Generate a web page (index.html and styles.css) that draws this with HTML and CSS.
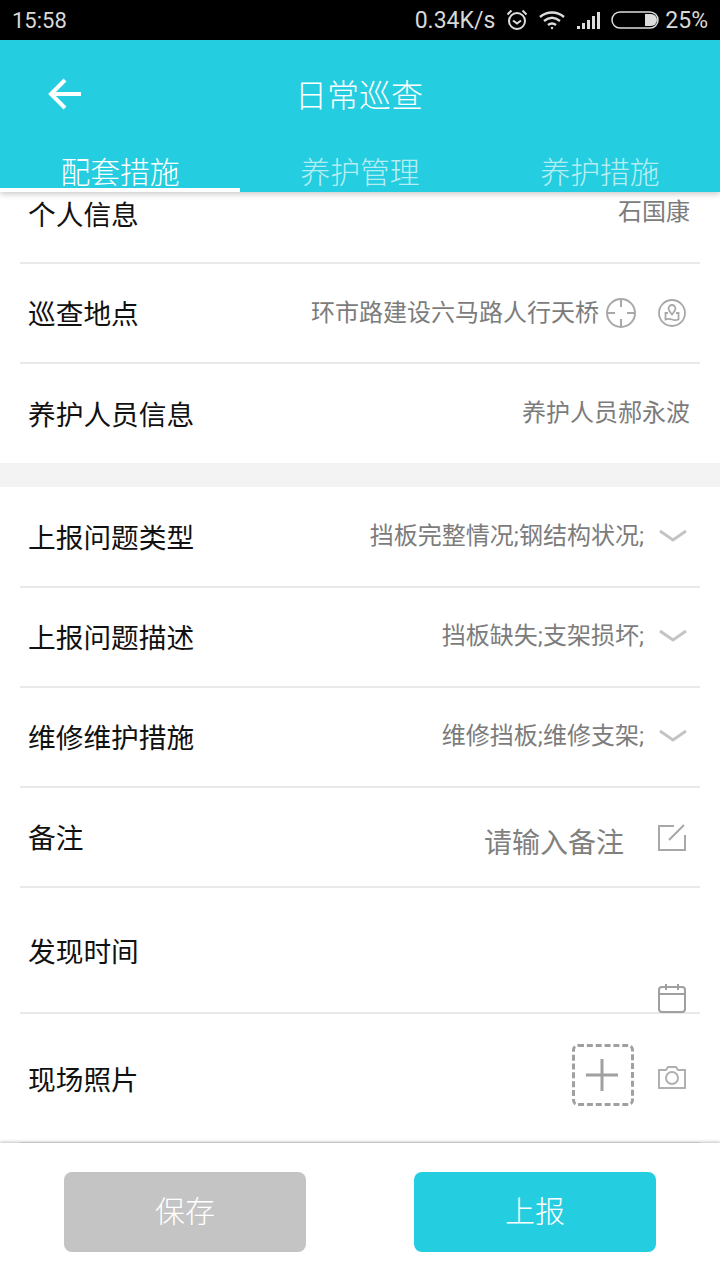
FILE: index.html
```html
<!DOCTYPE html>
<html lang="zh-CN">
<head>
<meta charset="utf-8">
<title>日常巡查</title>
<link rel="stylesheet" href="styles.css">
</head>
<body>
<div class="app">
  <div class="status">
    <span class="time">15:58</span>
    <div class="status-right">
      <span>0.34K/s</span>
      <svg class="st-alarm" width="24" height="24" viewBox="0 0 24 24" fill="none" stroke="#ddd" stroke-width="2"><circle cx="12" cy="13" r="8"/><path d="M8 12.5l4 3 4-3M2.500 6.500l4-4M21.500 6.500l-4-4"/></svg>
      <svg class="st-wifi" width="28" height="20" viewBox="0 0 28 20" fill="none" stroke="#ddd" stroke-width="2.400"><path d="M2 7c7-6 17-6 24 0M6 11c5-4 11-4 16 0M10 15c2.500-2 5.500-2 8 0"/><circle cx="14" cy="18" r="1.200" fill="#ddd" stroke="none"/></svg>
      <svg class="st-signal" width="26" height="18" viewBox="0 0 26 18" fill="#ddd"><path d="M1 15h3v3H1zM6 12h3v6H6zM11 9h3v9h-3zM16 5h3v13h-3zM21 1h3v17h-3z"/></svg>
      <svg class="st-batt" width="48" height="18" viewBox="0 0 48 18"><rect x="1" y="1" width="46" height="16" rx="8" fill="none" stroke="#ddd" stroke-width="1.500"/><path d="M34 3h6a6 6 0 0 1 0 12h-6z" fill="#ddd"/></svg>
      <span>25%</span>
    </div>
  </div>

  <header class="head">
    <div class="bar">
      <svg class="back" width="36" height="34" viewBox="0 0 36 34" fill="none" stroke="#fff" stroke-width="4"><path d="M34 17H4M18 3L4 17l14 14"/></svg>
      <h1 class="title">日常巡查</h1>
    </div>
    <nav class="tabs">
      <div class="tab tab-on">配套措施</div>
      <div class="tab">养护管理</div>
      <div class="tab">养护措施</div>
    </nav>
  </header>

  <main class="scroll">
    <section class="group">
      <div class="row row-first">
        <span class="label">个人信息</span>
        <span class="value value-end">石国康</span>
      </div>
      <div class="row">
        <span class="label">巡查地点</span>
        <span class="value">环市路建设六马路人行天桥</span>
        <svg class="icon target" width="32" height="32" viewBox="0 0 32 32" fill="none" stroke="#a8a8a8" stroke-width="2"><circle cx="16" cy="16" r="14"/><path d="M16 2v8M16 22v8M2 16h8M22 16h8"/></svg>
        <svg class="icon map" width="30" height="30" viewBox="0 0 30 30" fill="none" stroke="#a8a8a8" stroke-width="1.800"><circle cx="15" cy="15" r="13"/><path d="M15 16.500c-2-2.500-3.500-4-3.500-6a3.500 3.500 0 0 1 7 0c0 2-1.500 3.500-3.500 6z"/><path d="M11 15H8.500v6.500c3-1.200 4-1 6.500 0s3.500 1 6.500 0V15H19"/></svg>
      </div>
      <div class="row row-last">
        <span class="label">养护人员信息</span>
        <span class="value value-end">养护人员郝永波</span>
      </div>
    </section>

    <section class="group group-main">
      <div class="row">
        <span class="label">上报问题类型</span>
        <span class="value">挡板完整情况;钢结构状况;</span>
        <svg class="icon chev" width="28" height="14" viewBox="0 0 28 14" fill="none" stroke="#c4c4c4" stroke-width="3"><path d="M1 2l13 9 13-9"/></svg>
      </div>
      <div class="row">
        <span class="label">上报问题描述</span>
        <span class="value">挡板缺失;支架损坏;</span>
        <svg class="icon chev" width="28" height="14" viewBox="0 0 28 14" fill="none" stroke="#c4c4c4" stroke-width="3"><path d="M1 2l13 9 13-9"/></svg>
      </div>
      <div class="row">
        <span class="label">维修维护措施</span>
        <span class="value">维修挡板;维修支架;</span>
        <svg class="icon chev" width="28" height="14" viewBox="0 0 28 14" fill="none" stroke="#c4c4c4" stroke-width="3"><path d="M1 2l13 9 13-9"/></svg>
      </div>
      <div class="row">
        <span class="label">备注</span>
        <span class="hint">请输入备注</span>
        <svg class="icon edit" width="30" height="28" viewBox="0 0 30 28" fill="none" stroke="#a8a8a8" stroke-width="2"><path d="M17 2H2v24h26V11M12 16L27 1"/></svg>
      </div>
      <div class="row row-time">
        <span class="label">发现时间</span>
        <svg class="icon cal" width="28" height="30" viewBox="0 0 28 30" fill="none" stroke="#a0a0a0" stroke-width="2"><rect x="1" y="4" width="26" height="25" rx="3"/><path d="M1 11h26M8 1v6M20 1v6M10 4h8"/></svg>
      </div>
      <div class="row row-photo">
        <span class="label">现场照片</span>
        <div class="add">
          <svg class="plus" width="36" height="36" viewBox="0 0 36 36" fill="none" stroke="#a0a0a0" stroke-width="3"><path d="M18 2v32M2 18h32"/></svg>
        </div>
        <svg class="icon cam" width="30" height="24" viewBox="0 0 30 24" fill="none" stroke="#b0b0b0" stroke-width="2"><path d="M2 5h7l2-3h8l2 3h7v18H2z"/><circle cx="15" cy="13" r="6"/></svg>
      </div>
    </section>
  </main>

  <footer class="foot">
    <button class="btn btn-save">保存</button>
    <button class="btn btn-report">上报</button>
  </footer>
</div>
</body>
</html>
```
FILE: styles.css
```css
* { box-sizing: border-box; }
html, body { margin: 0; padding: 0; }
body {
  width: 720px;
  height: 1280px;
  overflow: hidden;
  background: #fff;
  font-family: "Noto Sans CJK SC", "Noto Sans", sans-serif;
}
.app { display: flex; flex-direction: column; height: 1280px; }

.status {
  height: 40px;
  background: #000;
  color: #d8d8d8;
  font-family: Roboto, sans-serif;
  font-size: 22px;
  padding: 0 12px;
  display: flex;
  align-items: center;
  justify-content: space-between;
  flex: none;
}
.status-right { display: flex; align-items: center; font-size: 23px; }
.st-alarm { margin-left: 10px; }
.st-wifi { margin-left: 9px; }
.st-signal { margin-left: 10px; }
.st-batt { margin-left: 9px; }
.status-right span:last-child { margin-left: 6px; }

.head { background: #25cde0; flex: none; height: 152px; display: flex; flex-direction: column; position: relative; z-index: 1; box-shadow: 0 2px 6px rgba(0,0,0,.22); }
.bar { height: 108px; display: flex; align-items: center; justify-content: center; position: relative; }
.back { position: absolute; left: 47px; top: 37px; }
.title { margin: 0; color: #fff; font-size: 32px; font-weight: 300; line-height: 1; position: relative; top: -1px; left: -1px; }
.tabs { display: flex; height: 44px; }
.tab {
  width: 240px;
  color: rgba(255,255,255,.68);
  font-size: 29.800px;
  font-weight: 300;
  line-height: 44px;
  text-align: center;
  height: 44px;
}
.tab-on { color: #fff; border-bottom: 4px solid #fff; }

.scroll { flex: 1; overflow: hidden; min-height: 0; }
.group { background: #fff; padding: 0 20px; }
.group-main { border-top: 24px solid #f3f3f3; padding-top: 1px; }
.row {
  height: 100px;
  display: flex;
  align-items: center;
  border-bottom: 2px solid #e9e9e9;
  padding: 0 13px 0 8px;
}
.row-first { height: 72px; align-items: flex-start; }
.row-first .label { line-height: 44px; }
.row-first .value { line-height: 46px; }
.row-last { border-bottom: 0; height: 99px; }
.label { color: #111; font-size: 27.700px; font-weight: 400; white-space: nowrap; position: relative; top: -1px; }
.value { color: #7c7c7c; font-family: Roboto, "Noto Sans CJK SC", sans-serif; font-size: 24px; font-weight: 400; margin-left: auto; white-space: nowrap; position: relative; top: -3px; }
.group-main .value { top: -4px; }
.value-end { margin-right: -3px; }
.hint { color: #808080; font-size: 28px; margin-left: auto; white-space: nowrap; position: relative; top: 4px; }
.icon { flex: none; }
.target { margin-left: 6px; }
.map { margin-left: 20px; }
.chev { margin-left: 15px; position: relative; top: -1px; }
.edit { margin-left: 33px; position: relative; top: 1px; }
.row-time { height: 126px; align-items: flex-start; position: relative; }
.row-time .label { margin-top: 43px; }
.row-time .cal { position: absolute; right: 14px; top: 95px; z-index: 2; }
.row-photo { height: 130px; }
.row-photo .label { top: 0; }
.add {
  margin-left: auto;
  width: 62px;
  height: 62px;
  border: 3px dashed #a0a0a0;
  border-radius: 6px;
  display: flex;
  align-items: center;
  justify-content: center;
  position: relative;
  top: -3px;
}
.plus { margin-left: -2px; }
.cam { margin-left: 23px; position: relative; top: -1px; }

.foot {
  flex: none;
  height: 137px;
  background: #fff;
  display: flex;
  justify-content: space-between;
  padding: 29px 64px 0;
  position: relative;
  box-shadow: 0 -1px 3px rgba(0,0,0,.25);
}
.btn {
  width: 242px;
  height: 80px;
  border: 0;
  border-radius: 8px;
  color: #fff;
  font-family: "Noto Sans CJK SC", sans-serif;
  font-size: 30px;
  font-weight: 300;
  padding: 0 0 6px;
}
.btn-save { background: #c4c4c4; }
.btn-report { background: #25cde0; }
```
